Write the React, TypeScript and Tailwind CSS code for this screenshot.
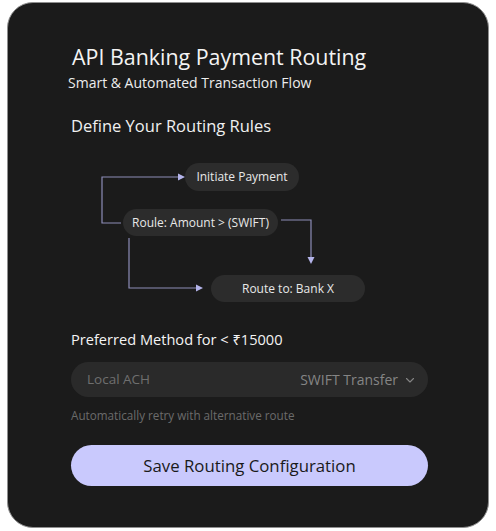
import React from 'react';

const font = { fontFamily: '"Open Sans", "Noto Sans", sans-serif' };

function Node({ label, className }: { label: string; className: string }) {
  return (
    <div
      className={`absolute flex items-center justify-center rounded-full bg-[#2c2c2c] text-[12px] text-[#e8e8e8] ${className}`}
    >
      {label}
    </div>
  );
}

function RoutingDiagram() {
  return (
    <div className="relative h-[152px] w-full">
      <svg className="absolute inset-0" width="357" height="152" viewBox="0 0 357 152" fill="none">
        {/* loop back to start */}
        <path d="M50 65 H31 V19 H108" stroke="#8d8db8" strokeWidth="1.2" />
        <path d="M107 15.5 L114 19 L107 22.5 Z" fill="#b4b4ea" />
        {/* down to bank */}
        <path d="M210 62 H240 V100" stroke="#8d8db8" strokeWidth="1.2" />
        <path d="M236.5 99 L240 106 L243.5 99 Z" fill="#b4b4ea" />
        {/* condition false */}
        <path d="M58 80 V130 H126" stroke="#8d8db8" strokeWidth="1.2" />
        <path d="M125 126.5 L132 130 L125 133.5 Z" fill="#b4b4ea" />
      </svg>
      <Node label="Initiate Payment" className="left-[114px] top-[5px] h-[28px] w-[114px]" />
      <Node label="Roule: Amount > (SWIFT)" className="left-[52px] top-[51px] h-[27px] w-[155px]" />
      <Node label="Route to: Bank X" className="left-[140px] top-[117px] h-[27px] w-[154px]" />
    </div>
  );
}

export default function App() {
  return (
    <div className="min-h-screen bg-white pl-[7px] pt-[2px]" style={font}>
      <div className="h-[526px] w-[482px] rounded-[26px] border border-[#8f8f8f] bg-[#1b1b1b] pl-[63px] pr-[60px] pt-[40px]">
        <h1 className="pl-[1px] text-[21.4px] leading-[28px] text-[#f4f4f4]">API Banking Payment Routing</h1>
        <p className="-ml-[3px] mt-[3px] text-[14px] leading-[18px] text-[#ededed]">Smart &amp; Automated Transaction Flow</p>
        <h2 className="mt-[22px] text-[16.5px] leading-[24px] text-[#f0f0f0]">Define Your Routing Rules</h2>

        <div className="mt-[20px]">
          <RoutingDiagram />
        </div>

        <h3 className="mt-[18px] text-[14.6px] leading-[22px] text-[#f4f4f4]">Preferred Method for &lt; ₹15000</h3>

        <button className="mt-[12px] flex h-[35px] w-full items-center justify-between rounded-full bg-[#2a2a2a] pl-[16px] pr-[12px]">
          <span className="text-[13.5px] text-[#6f6f6f]">Local ACH</span>
          <span className="flex items-center gap-[6px] text-[14px] text-[#858585]">
            SWIFT Transfer
            <svg width="12" height="12" viewBox="0 0 24 24" fill="none" stroke="#858585" strokeWidth="2.2" strokeLinecap="round" strokeLinejoin="round">
              <path d="M5 9l7 7 7-7" />
            </svg>
          </span>
        </button>

        <p className="mt-[10px] text-[11.7px] leading-[16px] text-[#6b6b6b]">Automatically retry with alternative route</p>

        <button className="mt-[22px] h-[41px] w-full rounded-full bg-[#c9c9fd] text-[16.8px] text-[#1a1a1a]">
          Save Routing Configuration
        </button>
      </div>
    </div>
  );
}
